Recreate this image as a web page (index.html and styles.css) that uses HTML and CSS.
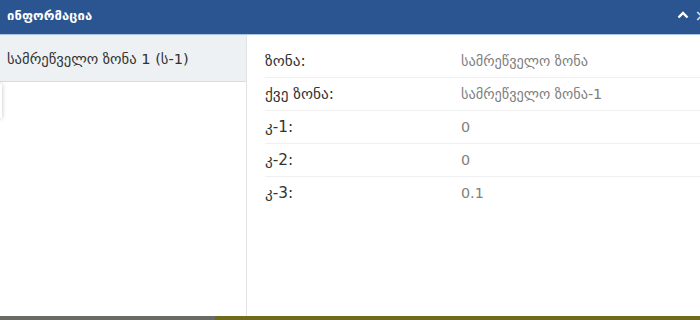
FILE: index.html
```html
<!DOCTYPE html>
<html lang="ka">
<head>
    <meta charset="UTF-8">
    <title>ინფორმაცია</title>
    <link rel="stylesheet" href="styles.css">
</head>
<body>
    <div class="panel">
        <div class="panel-head">
            <span class="panel-title">ინფორმაცია</span>
            <span class="panel-tools">
                <svg class="chevron" width="12" height="8" viewBox="0 0 12 8"><path d="M1.5 6.5 L6 2 L10.5 6.5" fill="none" stroke="#fff" stroke-width="2.4"/></svg>
                <span class="close">×</span>
            </span>
        </div>
        <div class="panel-body">
            <div class="layer-list">
                <div class="layer-item active">სამრეწველო ზონა 1 (ს-1)</div>
                <div class="tip-edge"></div>
            </div>
            <div class="attrs">
                <div class="attr-row"><span class="attr-name">ზონა:</span><span class="attr-val">სამრეწველო ზონა</span></div>
                <div class="attr-row"><span class="attr-name">ქვე ზონა:</span><span class="attr-val">სამრეწველო ზონა-1</span></div>
                <div class="attr-row"><span class="attr-name">კ-1:</span><span class="attr-val">0</span></div>
                <div class="attr-row"><span class="attr-name">კ-2:</span><span class="attr-val">0</span></div>
                <div class="attr-row"><span class="attr-name">კ-3:</span><span class="attr-val">0.1</span></div>
            </div>
        </div>
    </div>
    <div class="map-strip">
        <div class="strip-gray"></div>
        <div class="strip-olive"></div>
    </div>
</body>
</html>
```

FILE: styles.css
```css
body {
    margin: 0;
    font-family: "DejaVu Sans", "Noto Sans", sans-serif;
    background: #ffffff;
    color: #333333;
    width: 700px;
    height: 320px;
    overflow: hidden;
    display: flex;
    flex-direction: column;
}
.panel {
    flex: 1;
    display: flex;
    flex-direction: column;
    min-height: 0;
}
.panel-head {
    height: 34px;
    background-color: #2b5590;
    border-bottom: 1px solid #a9c3e0;
    display: flex;
    align-items: center;
    justify-content: space-between;
    padding-left: 7px;
    color: #ffffff;
    flex-shrink: 0;
}
.panel-title {
    font-size: 13px;
    font-weight: bold;
    letter-spacing: 0.1px;
    margin-top: -4px;
}
.panel-tools {
    display: flex;
    align-items: center;
    gap: 6px;
    margin-right: -8px;
    margin-top: -4px;
}
.close {
    font-size: 16px;
    color: #dfe6f0;
}
.panel-body {
    flex: 1;
    display: flex;
    min-height: 0;
}
.layer-list {
    width: 246px;
    border-right: 1px solid #e3e3e3;
    position: relative;
}
.layer-item {
    height: 46px;
    display: flex;
    align-items: center;
    padding-left: 7px;
    font-size: 14.6px;
    border-bottom: 1px solid #dcdcdc;
}
.layer-item.active {
    background-color: #eef1f4;
}
.tip-edge {
    position: absolute;
    left: -6px;
    top: 49px;
    width: 8px;
    height: 34px;
    background: #ffffff;
    box-shadow: 0 0 4px rgba(0, 0, 0, 0.25);
}
.attrs {
    flex: 1;
    padding: 10px 0 0 18px;
}
.attr-row {
    display: flex;
    height: 32px;
    align-items: center;
    border-bottom: 1px solid #f0f0f0;
    font-size: 15.3px;
}
.attr-row:last-child {
    border-bottom: none;
}
.attr-name {
    width: 196px;
    color: #333333;
}
.attr-val {
    color: #808080;
    font-size: 14.3px;
}
.map-strip {
    height: 4px;
    display: flex;
    flex-shrink: 0;
}
.strip-gray {
    width: 215px;
    background: #6b6b66;
}
.strip-olive {
    flex: 1;
    background: #6e6c1c;
}
```
